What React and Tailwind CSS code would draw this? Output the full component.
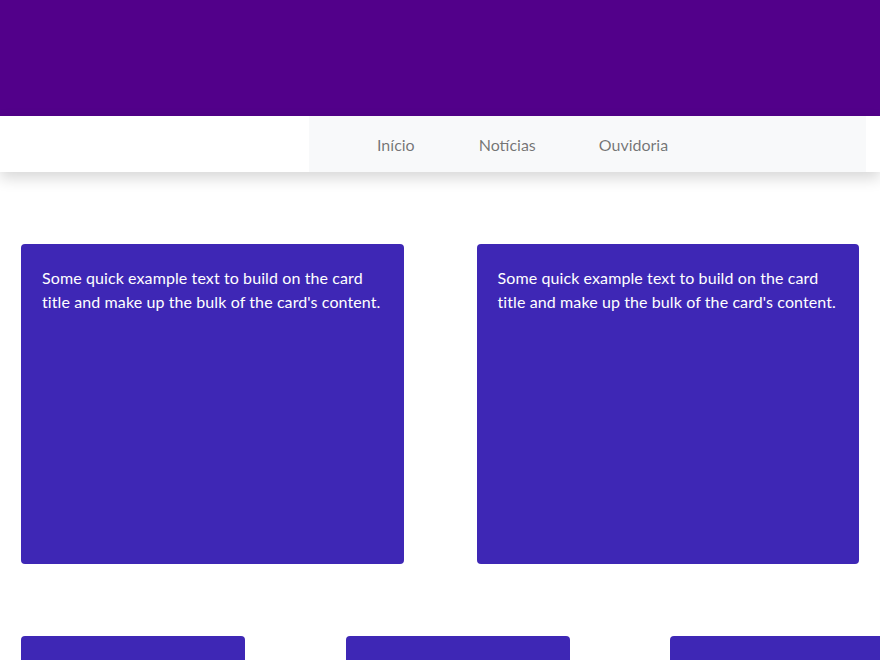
export default function App() {
  const text =
    "Some quick example text to build on the card title and make up the bulk of the card's content.";

  return (
    <div className="min-h-screen overflow-hidden bg-white font-['Lato','Liberation_Sans',sans-serif] text-base">
      <header className="h-[116px] bg-[#52008a]" />

      <nav className="relative flex h-[56px] bg-white shadow-[0_6px_14px_rgba(0,0,0,0.16)]">
        <div className="ml-[309px] flex w-[557px] items-center bg-[#f8f9fa] pl-[68px] pt-[2px]">
          <a className="mr-[64px] text-[rgba(0,0,0,0.55)]" href="#">
            Início
          </a>
          <a className="mr-[63px] text-[rgba(0,0,0,0.55)]" href="#">
            Notícias
          </a>
          <a className="text-[rgba(0,0,0,0.55)]" href="#">
            Ouvidoria
          </a>
        </div>
      </nav>

      <main className="pt-[72px]">
        <div className="grid grid-cols-2 gap-[73px] px-[21px]">
          {[0, 1].map((i) => (
            <div
              key={i}
              className="h-[320px] rounded-[4px] bg-[#3e27b5] px-[21px] py-[22px] leading-6 text-white"
            >
              <p className="w-[340px] tracking-[0.1px]">{text}</p>
            </div>
          ))}
        </div>

        <div className="mt-[72px] flex pl-[21px]">
          <div className="h-[120px] w-[224px] shrink-0 rounded-[4px] bg-[#3e27b5]" />
          <div className="ml-[101px] h-[120px] w-[224px] shrink-0 rounded-[4px] bg-[#3e27b5]" />
          <div className="ml-[100px] h-[120px] w-[224px] shrink-0 rounded-[4px] bg-[#3e27b5]" />
        </div>
      </main>
    </div>
  );
}
